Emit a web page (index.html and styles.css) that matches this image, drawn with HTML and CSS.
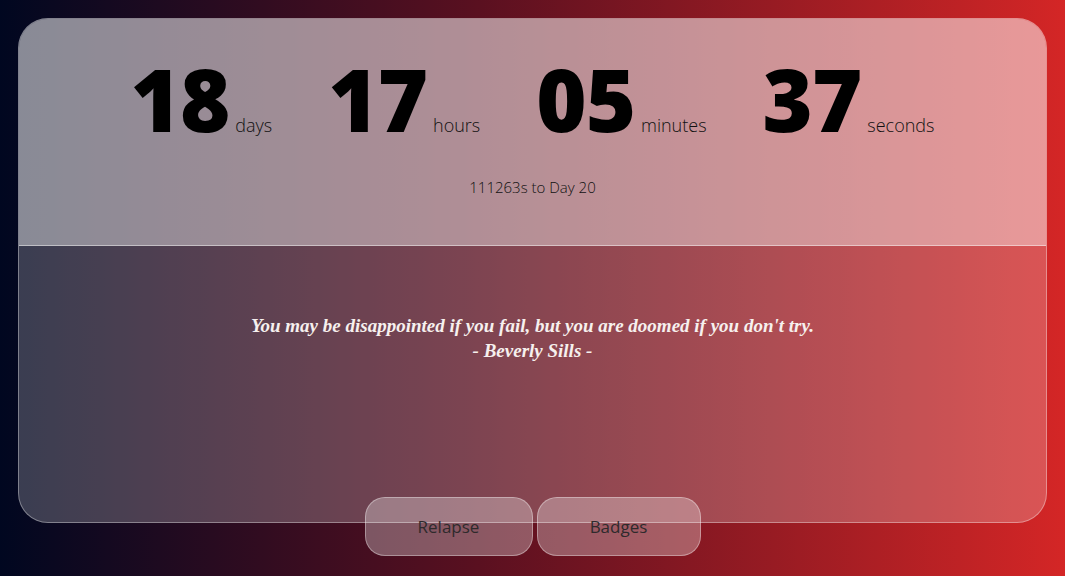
FILE: index.html
```html
<!DOCTYPE html>
<html>
<head>
<meta charset="utf-8">
<link rel="stylesheet" href="styles.css">
</head>
<body>
<main class="page">
  <section class="card">
    <div class="top">
      <div class="counter">
        <div class="unit"><span class="num">18</span><span class="label">days</span></div>
        <div class="unit"><span class="num">17</span><span class="label">hours</span></div>
        <div class="unit"><span class="num">05</span><span class="label">minutes</span></div>
        <div class="unit"><span class="num">37</span><span class="label">seconds</span></div>
      </div>
      <p class="next">111263s to Day 20</p>
    </div>
    <div class="bottom">
      <p class="quote">You may be disappointed if you fail, but you are doomed if you don't try.<br>- Beverly Sills -</p>
    </div>
  </section>
  <nav class="actions">
    <button class="btn btn-relapse">Relapse</button>
    <button class="btn btn-badges">Badges</button>
  </nav>
</main>
</body>
</html>
```

FILE: styles.css
```css
html, body {
  margin: 0;
  padding: 0;
  height: 100%;
}
body {
  background: linear-gradient(to right, #000720 0%, #5a1020 45%, #d42626 100%);
  font-family: "Open Sans", "DejaVu Sans", sans-serif;
  overflow: hidden;
}
.page {
  padding: 18px 18px 0 18px;
  display: flex;
  flex-direction: column;
  align-items: stretch;
}
.card {
  height: 505px;
  box-sizing: border-box;
  border: 1px solid rgba(255,255,255,0.35);
  border-radius: 30px;
  background: rgba(255,255,255,0.22);
  overflow: hidden;
  display: flex;
  flex-direction: column;
}
.top {
  height: 227px;
  box-sizing: border-box;
  background: rgba(255,255,255,0.4);
  border-bottom: 1px solid rgba(255,255,255,0.45);
  display: flex;
  flex-direction: column;
  align-items: center;
  padding-top: 30px;
}
.counter {
  display: flex;
  gap: 56px;
  align-items: baseline;
}
.unit {
  display: flex;
  align-items: baseline;
  gap: 6px;
}
.num {
  font-family: "Open Sans", sans-serif;
  font-weight: 800;
  font-size: 86px;
  line-height: 100px;
  color: #000;
  letter-spacing: -1px;
}
.label {
  font-family: "Open Sans", sans-serif;
  font-weight: 300;
  font-size: 18px;
  color: #111;
}
.next {
  margin: 28px 0 0 0;
  font-size: 15px;
  font-weight: 300;
  color: #111;
}
.bottom {
  flex: 1;
  display: flex;
  justify-content: center;
  padding-top: 67px;
}
.quote {
  margin: 0;
  text-align: center;
  font-family: "Liberation Serif", "DejaVu Serif", serif;
  font-style: italic;
  font-weight: 700;
  font-size: 19px;
  line-height: 25px;
  color: #f6f0ee;
}
.actions {
  display: flex;
  justify-content: center;
  gap: 4px;
  margin-top: -26px;
}
.btn {
  height: 59px;
  border-radius: 20px;
  border: 1px solid rgba(255,255,255,0.35);
  background: rgba(255,255,255,0.3);
  font-family: "Open Sans", sans-serif;
  font-weight: 400;
  font-size: 17px;
  color: #2e2a2c;
  padding: 0;
}
.btn-relapse { width: 168px; }
.btn-badges { width: 164px; }
```
